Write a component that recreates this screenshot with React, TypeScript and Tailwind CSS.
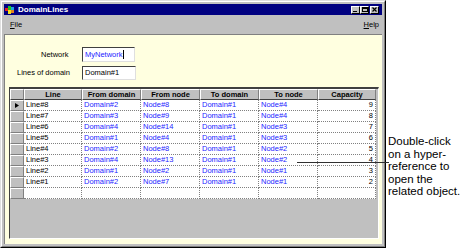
import React from "react";

const rows = [
  ["Line#8", "Domain#2", "Node#8", "Domain#1", "Node#4", "9"],
  ["Line#7", "Domain#3", "Node#9", "Domain#1", "Node#4", "8"],
  ["Line#6", "Domain#4", "Node#14", "Domain#1", "Node#3", "7"],
  ["Line#5", "Domain#1", "Node#4", "Domain#1", "Node#3", "6"],
  ["Line#4", "Domain#2", "Node#8", "Domain#1", "Node#2", "5"],
  ["Line#3", "Domain#4", "Node#13", "Domain#1", "Node#2", "4"],
  ["Line#2", "Domain#1", "Node#2", "Domain#1", "Node#1", "3"],
  ["Line#1", "Domain#2", "Node#7", "Domain#1", "Node#1", "2"],
];

const headers = ["Line", "From domain", "From node", "To domain", "To node", "Capacity"];
const widths = ["w-[58px]", "w-[59px]", "w-[59px]", "w-[59px]", "w-[59px]", "w-[58px]"];

function TitleButton({ children }: { children: React.ReactNode }) {
  return (
    <div className="w-[9px] h-[8px] bg-[#c0c0c0] border-t border-l border-t-white border-l-white border-b border-r border-b-black border-r-black flex items-center justify-center">
      {children}
    </div>
  );
}

function Indicator({ active }: { active?: boolean }) {
  return (
    <div className="w-[14px] h-[11px] bg-[#c0c0c0] border-t border-l border-t-white border-l-white border-b border-r border-b-[#808080] border-r-[#808080] flex items-center justify-center shrink-0">
      {active && (
        <svg width="4" height="5" viewBox="0 0 4 5">
          <path d="M0 0 L4 2.5 L0 5 Z" fill="#000" />
        </svg>
      )}
    </div>
  );
}

export default function App() {
  return (
    <div className="w-[475px] h-[249px] bg-white flex relative overflow-hidden font-['Liberation_Sans',Arial,sans-serif] text-black">
      {/* Window */}
      <div className="w-[386px] h-[248px] shrink-0 bg-[#c0c0c0] border-t border-l border-t-[#dfdfdf] border-l-[#dfdfdf] border-b border-r border-b-black border-r-black">
        <div className="h-full border-t border-l border-t-white border-l-white border-b border-r border-b-[#808080] border-r-[#808080] p-[2px] flex flex-col">
          {/* Title bar */}
          <div className="h-[11px] bg-[#000080] flex items-center pl-[1px] pr-[3px] shrink-0">
            <svg width="9" height="8" viewBox="0 0 9 8" className="shrink-0">
              <rect x="0" y="2" width="3" height="3" fill="#e02020" />
              <rect x="3" y="0" width="3" height="4" fill="#20c020" />
              <rect x="3" y="4" width="3" height="4" fill="#f0e020" />
              <rect x="6" y="1" width="3" height="3" fill="#20a0e0" />
              <rect x="6" y="4" width="3" height="3" fill="#e08020" />
            </svg>
            <span className="ml-[4px] text-white font-bold text-[8px] leading-[11px]">DomainLines</span>
            <div className="ml-auto flex items-center">
              <TitleButton>
                <div className="w-[4px] h-[1px] bg-black mt-[4px] -ml-[1px]" />
              </TitleButton>
              <TitleButton>
                <div className="w-[6px] h-[5px] border border-black border-t-2" />
              </TitleButton>
              <div className="w-[1px]" />
              <TitleButton>
                <svg width="5" height="5" viewBox="0 0 5 5">
                  <path d="M0.5 0.5 L4.5 4.5 M4.5 0.5 L0.5 4.5" stroke="#000" strokeWidth="1.2" />
                </svg>
              </TitleButton>
            </div>
          </div>
          {/* Menu bar */}
          <div className="h-[19px] flex items-center justify-between pl-[6px] pr-[3px] text-[7.5px] shrink-0">
            <span><span className="underline">F</span>ile</span>
            <span><span className="underline">H</span>elp</span>
          </div>
          {/* Content */}
          <div className="flex-1 bg-[#ffffe0] border-t border-l border-t-[#808080] border-l-[#808080] flex flex-col">
            <div className="flex items-center pt-[12px] pl-[36px] text-[7.5px]">
              <div className="w-[41px]">Network</div>
              <div className="w-[53px] h-[15px] bg-white border-t border-l border-t-[#404040] border-l-[#404040] border-b border-r border-b-[#dfdfdf] border-r-[#dfdfdf] flex items-center pl-[2px]">
                <span className="text-[#2424ff]">MyNetwork</span>
                <span className="w-px h-[9px] bg-black" />
              </div>
            </div>
            <div className="flex items-center pt-[4px] pl-[12px] text-[7.5px]">
              <div className="w-[65px]">Lines of domain</div>
              <div className="w-[54px] h-[14px] bg-white border-t border-l border-t-[#404040] border-l-[#404040] border-b border-r border-b-[#dfdfdf] border-r-[#dfdfdf] flex items-center pl-[2px]">
                Domain#1
              </div>
            </div>
            {/* Grid */}
            <div className="ml-[4px] mt-[7px] w-[370px] h-[152px] bg-[#c0c0c0] border-t-2 border-l border-t-[#404040] border-l-[#404040] border-b border-r border-b-white border-r-white text-[7.5px]">
              <div className="flex h-[11px]">
                <div className="w-[14px] h-[11px] bg-[#c0c0c0] border-t border-l border-t-white border-l-white border-b border-r border-b-[#404040] border-r-[#808080] shrink-0" />
                {headers.map((h, i) => (
                  <div
                    key={h}
                    className={`${widths[i]} h-[11px] shrink-0 bg-[#c0c0c0] border-t border-l border-t-white border-l-white border-b border-r border-b-[#404040] border-r-[#808080] flex items-center justify-center font-bold leading-none`}
                  >
                    {h}
                  </div>
                ))}
              </div>
              {rows.map((r, ri) => (
                <div key={ri} className="flex h-[11px]">
                  <Indicator active={ri === 0} />
                  {r.map((c, ci) => (
                    <div
                      key={ci}
                      className={`${widths[ci]} h-[11px] shrink-0 bg-white border-r border-b border-dotted border-[#808080] flex items-center leading-none ${
                        ci === 5 ? "justify-end pr-[2px]" : "pl-[2px]"
                      } ${ci === 1 || ci === 2 || ci === 3 || ci === 4 ? "text-[#2424ff]" : "text-black"}`}
                    >
                      {c}
                    </div>
                  ))}
                </div>
              ))}
              <div className="flex h-[11px]">
                <Indicator />
                {widths.map((w, i) => (
                  <div key={i} className={`${w} h-[11px] shrink-0 bg-white border-r border-b border-dotted border-[#808080]`} />
                ))}
              </div>
            </div>
          </div>
        </div>
      </div>
      {/* Annotation */}
      <div className="pt-[135px] pl-[2px] text-[11.5px] leading-[12.5px] whitespace-nowrap">
        <div>Double-click</div>
        <div>on a hyper-</div>
        <div>reference to</div>
        <div>open the</div>
        <div>related object.</div>
      </div>
      <div className="absolute left-[297px] top-[162px] w-[92px] h-px bg-[#303030]" />
    </div>
  );
}
